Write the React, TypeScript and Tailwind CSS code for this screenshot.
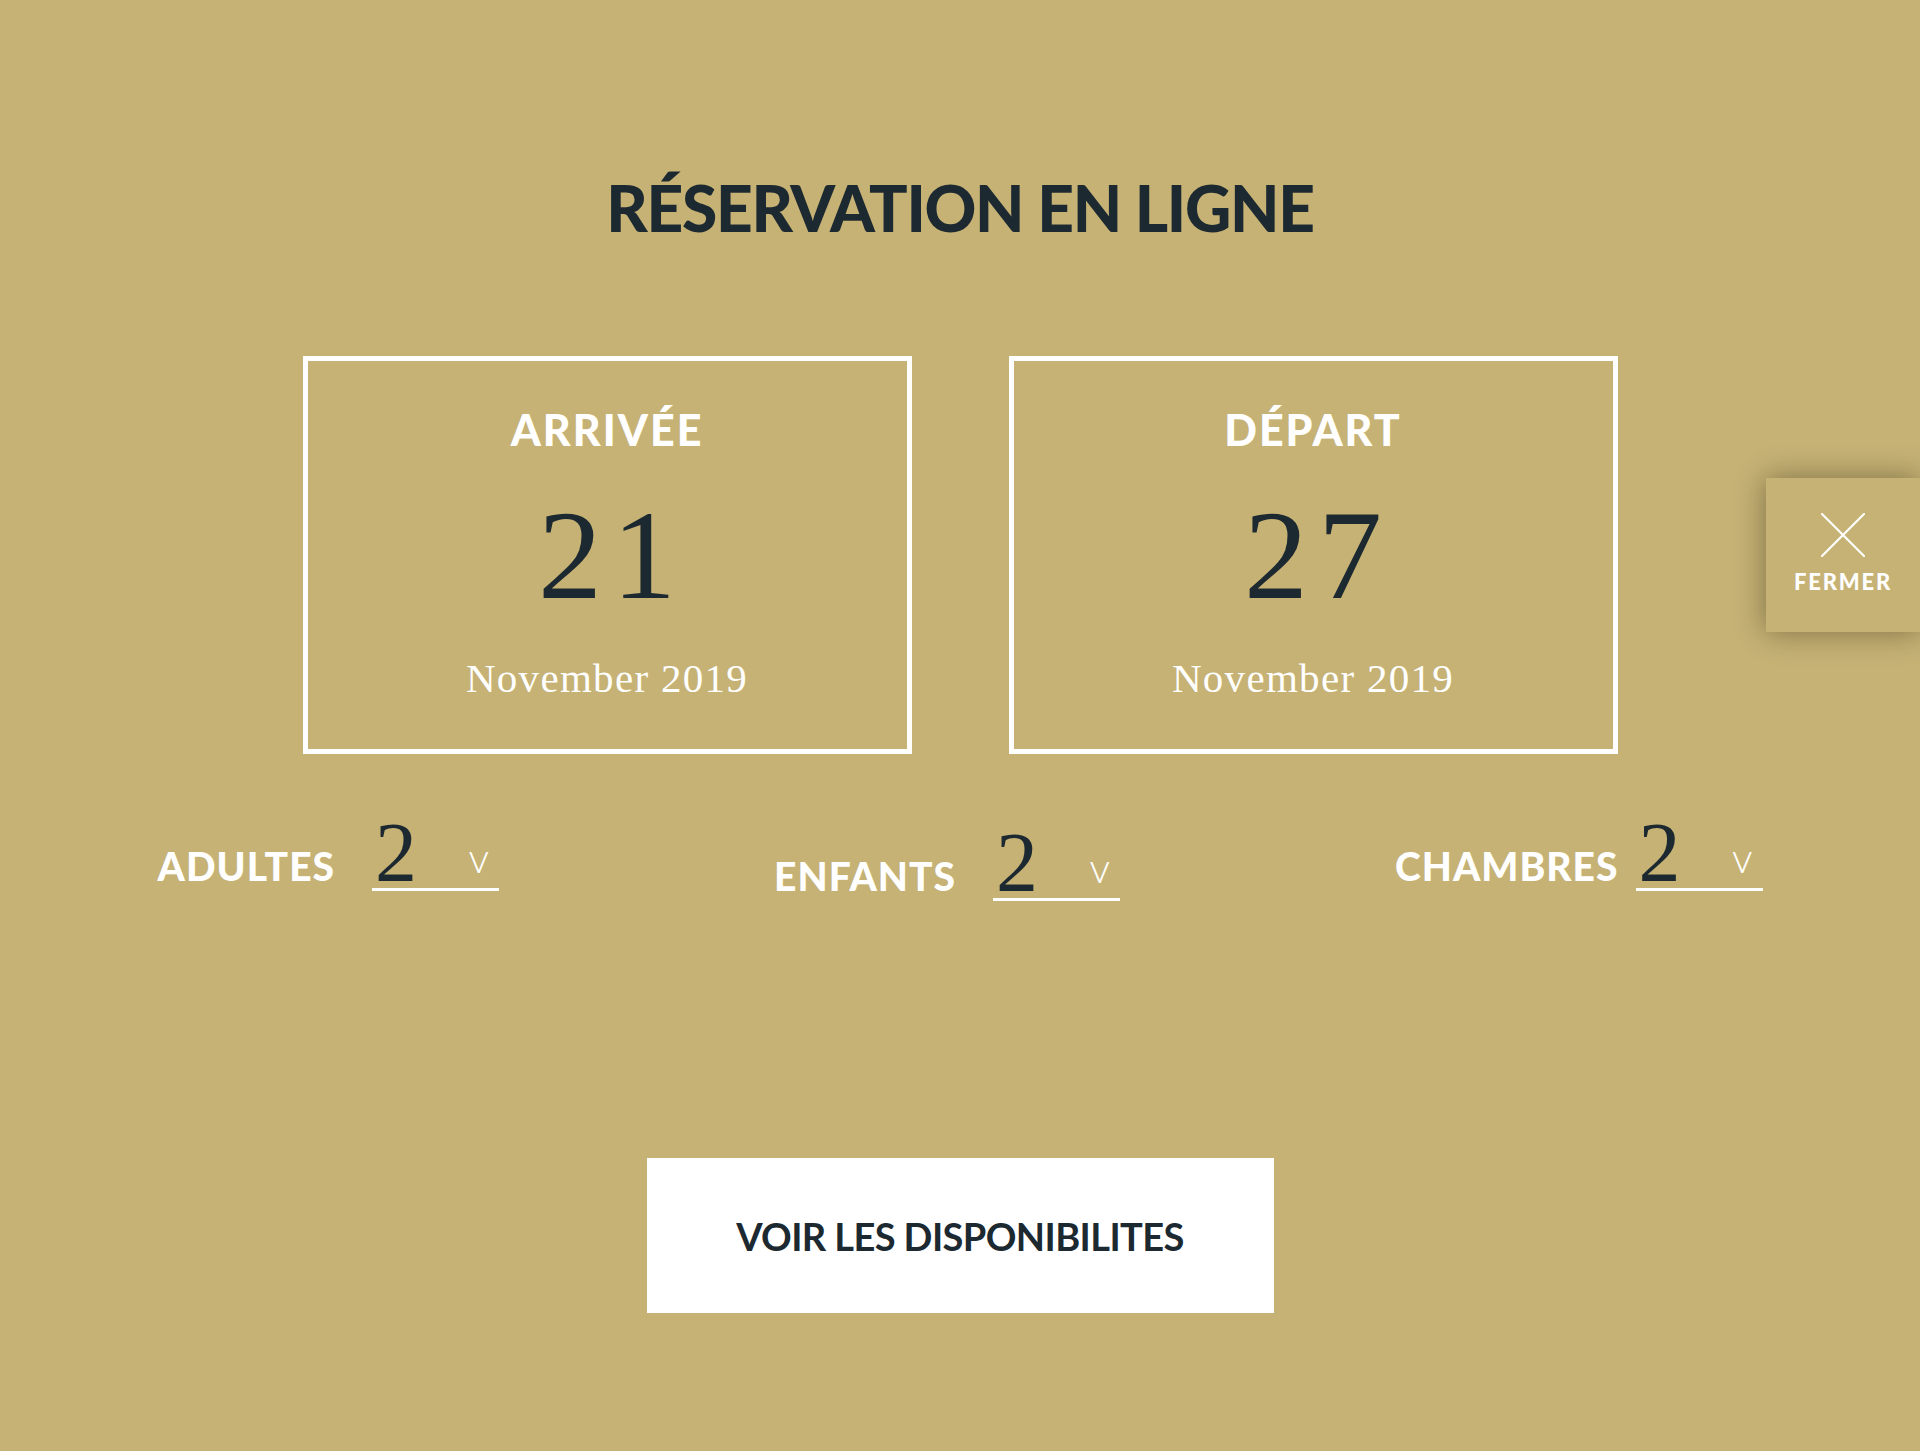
import { useState } from 'react';

type Counter = {
  label: string;
  value: number;
  gap: string;
  offset: string;
};

const counters: Counter[] = [
  { label: 'ADULTES', value: 2, gap: 'mr-[37px]', offset: '' },
  { label: 'ENFANTS', value: 2, gap: 'mr-[37px]', offset: 'mt-[10px]' },
  { label: 'CHAMBRES', value: 2, gap: 'mr-[17px]', offset: '' },
];

function DateBox({ title, day, month }: { title: string; day: string; month: string }) {
  return (
    <div className="w-[609px] border-[5px] border-white flex flex-col items-center pt-[47px] pb-[50px]">
      <div className="font-['Lato',sans-serif] font-black text-white text-[43px] leading-none tracking-[2px]">
        {title}
      </div>
      <div className="mt-[40px] font-['Liberation_Serif',serif] text-[#1c2930] text-[128px] leading-none tracking-[10px] pl-[10px]">
        {day}
      </div>
      <div className="mt-[39px] font-['Liberation_Serif',serif] text-white text-[41px] leading-none tracking-[1.3px]">
        {month}
      </div>
    </div>
  );
}

function CounterSelect({ counter }: { counter: Counter }) {
  return (
    <div className={`flex items-baseline ${counter.offset}`}>
      <span
        className={`font-['Lato',sans-serif] font-black text-white text-[39px] leading-none tracking-[1px] ${counter.gap}`}
      >
        {counter.label}
      </span>
      <div className="w-[127px] flex items-end justify-between border-b-[3px] border-white pl-[3px] pr-[10px]">
        <span className="font-['Liberation_Serif',serif] text-[#1c2930] text-[84px] leading-[70px]">
          {counter.value}
        </span>
        <span className="font-['Lato',sans-serif] font-light text-white text-[41px] leading-none mb-[10px]">
          v
        </span>
      </div>
    </div>
  );
}

export default function App() {
  const [open, setOpen] = useState(true);

  return (
    <div className="relative min-h-screen bg-[#c6b275] overflow-hidden">
      <div className="flex flex-col items-center pt-[176px]">
        <h1 className="font-['Lato',sans-serif] font-black text-[#1c2930] text-[64px] leading-none tracking-[-1.3px]">
          RÉSERVATION EN LIGNE
        </h1>

        <div className="mt-[116px] flex gap-[97px]">
          <DateBox title="ARRIVÉE" day="21" month="November 2019" />
          <DateBox title="DÉPART" day="27" month="November 2019" />
        </div>

        <div className="mt-[64px] w-[1605px] flex items-start justify-between">
          {counters.map((c) => (
            <CounterSelect key={c.label} counter={c} />
          ))}
        </div>

        <button className="mt-[257px] w-[627px] h-[155px] bg-white flex items-center justify-center font-['Lato',sans-serif] font-bold text-[#1c2930] text-[38px] leading-none tracking-[-0.6px]">
          VOIR LES DISPONIBILITES
        </button>
      </div>

      {open && (
        <button
          onClick={() => setOpen(false)}
          className="absolute right-0 top-[478px] w-[154px] h-[154px] bg-[#c6b275] shadow-[0_0_28px_rgba(40,30,10,0.45)] flex flex-col items-center pt-[35px]"
        >
          <svg width="44" height="44" viewBox="0 0 44 44" fill="none" stroke="white" strokeWidth="2.2" strokeLinecap="round">
            <path d="M1 1 L43 43" />
            <path d="M43 1 L1 43" />
          </svg>
          <span className="mt-[14px] font-['Lato',sans-serif] font-black text-white text-[22px] leading-none tracking-[1.8px]">
            FERMER
          </span>
        </button>
      )}
    </div>
  );
}
